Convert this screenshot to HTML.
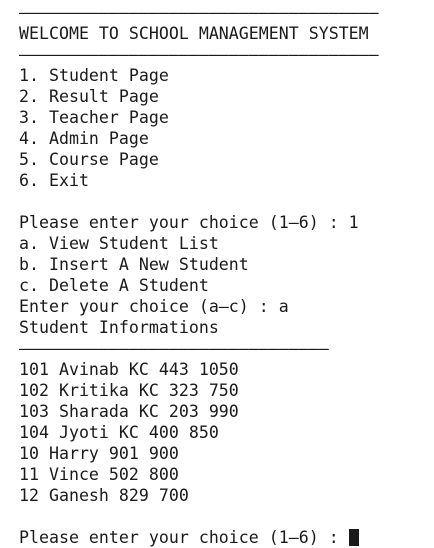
<!DOCTYPE html>
<html><head><meta charset="utf-8"><style>
html,body{margin:0;padding:0;background:#fff;width:434px;height:543px;overflow:hidden}
pre{margin:0;position:absolute;left:19px;top:1.5px;font-family:"DejaVu Sans Mono","Liberation Mono",monospace;font-size:16.6px;line-height:21px;color:#1a1a1a}
.top{position:absolute;left:19px;top:-19.5px;margin:0;font-family:"DejaVu Sans Mono","Liberation Mono",monospace;font-size:16.6px;line-height:21px;color:#1a1a1a}
.cur{display:inline-block;width:10px;height:17px;background:#1a1a1a;vertical-align:-3px}
</style></head><body><pre class="top">          ,       ,         ,</pre><pre>––––––––––––––––––––––––––––––––––––
WELCOME TO SCHOOL MANAGEMENT SYSTEM
––––––––––––––––––––––––––––––––––––
1. Student Page
2. Result Page
3. Teacher Page
4. Admin Page
5. Course Page
6. Exit

Please enter your choice (1–6) : 1
a. View Student List
b. Insert A New Student
c. Delete A Student
Enter your choice (a–c) : a
Student Informations
–––––––––––––––––––––––––––––––
101 Avinab KC 443 1050
102 Kritika KC 323 750
103 Sharada KC 203 990
104 Jyoti KC 400 850
10 Harry 901 900
11 Vince 502 800
12 Ganesh 829 700

Please enter your choice (1–6) : <span class="cur"></span></pre></body></html>
